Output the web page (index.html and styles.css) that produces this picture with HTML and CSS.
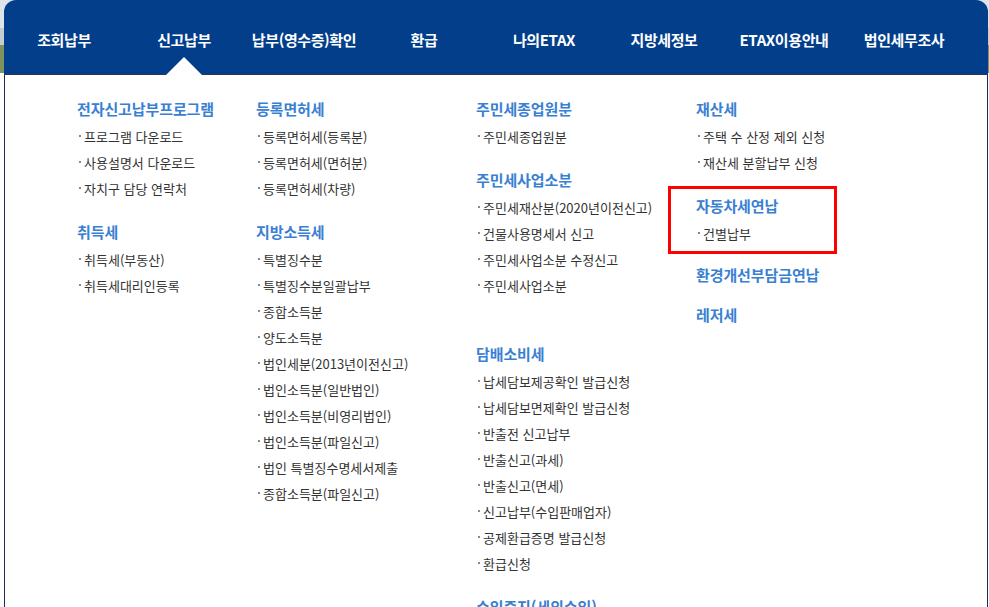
FILE: index.html
```html
<!DOCTYPE html>
<html lang="ko">
<head>
<meta charset="UTF-8">
<meta name="viewport" content="width=device-width, initial-scale=1.0">
<title>신고납부</title>
<link rel="stylesheet" href="styles.css">
</head>
<body>

<div class="gnb">
    <ul class="menu">
        <li>조회납부</li>
        <li class="on">신고납부</li>
        <li>납부(영수증)확인</li>
        <li>환급</li>
        <li>나의ETAX</li>
        <li>지방세정보</li>
        <li>ETAX이용안내</li>
        <li>법인세무조사</li>
    </ul>

    <div class="sub">
        <div class="col">
            <div class="group">
                <h3>전자신고납부프로그램</h3>
                <ul>
                    <li>프로그램 다운로드</li>
                    <li>사용설명서 다운로드</li>
                    <li>자치구 담당 연락처</li>
                </ul>
            </div>
            <div class="group">
                <h3>취득세</h3>
                <ul>
                    <li>취득세(부동산)</li>
                    <li>취득세대리인등록</li>
                </ul>
            </div>
        </div>

        <div class="col">
            <div class="group">
                <h3>등록면허세</h3>
                <ul>
                    <li>등록면허세(등록분)</li>
                    <li>등록면허세(면허분)</li>
                    <li>등록면허세(차량)</li>
                </ul>
            </div>
            <div class="group">
                <h3>지방소득세</h3>
                <ul>
                    <li>특별징수분</li>
                    <li>특별징수분일괄납부</li>
                    <li>종합소득분</li>
                    <li>양도소득분</li>
                    <li>법인세분(2013년이전신고)</li>
                    <li>법인소득분(일반법인)</li>
                    <li>법인소득분(비영리법인)</li>
                    <li>법인소득분(파일신고)</li>
                    <li>법인 특별징수명세서제출</li>
                    <li>종합소득분(파일신고)</li>
                </ul>
            </div>
        </div>

        <div class="col">
            <div class="group">
                <h3>주민세종업원분</h3>
                <ul>
                    <li>주민세종업원분</li>
                </ul>
            </div>
            <div class="group spaced">
                <h3>주민세사업소분</h3>
                <ul>
                    <li>주민세재산분(2020년이전신고)</li>
                    <li>건물사용명세서 신고</li>
                    <li>주민세사업소분 수정신고</li>
                    <li>주민세사업소분</li>
                </ul>
            </div>
            <div class="group">
                <h3>담배소비세</h3>
                <ul>
                    <li>납세담보제공확인 발급신청</li>
                    <li>납세담보면제확인 발급신청</li>
                    <li>반출전 신고납부</li>
                    <li>반출신고(과세)</li>
                    <li>반출신고(면세)</li>
                    <li>신고납부(수입판매업자)</li>
                    <li>공제환급증명 발급신청</li>
                    <li>환급신청</li>
                </ul>
            </div>
            <div class="group">
                <h3>수입증지(세외수입)</h3>
            </div>
        </div>

        <div class="col">
            <div class="group">
                <h3>재산세</h3>
                <ul>
                    <li>주택 수 산정 제외 신청</li>
                    <li>재산세 분할납부 신청</li>
                </ul>
            </div>
            <div class="group highlight">
                <h3>자동차세연납</h3>
                <ul>
                    <li>건별납부</li>
                </ul>
            </div>
            <div class="group solo">
                <h3>환경개선부담금연납</h3>
            </div>
            <div class="group">
                <h3>레저세</h3>
            </div>
        </div>
    </div>
</div>

</body>
</html>
```

FILE: styles.css
```css
* {
    box-sizing: border-box;
}
html, body {
    overflow: hidden;
}
body {
    margin: 0;
    font-family: "Noto Sans CJK KR", "Noto Sans", sans-serif;
    background: linear-gradient(to bottom, #dde4ea 0, #dde4ea 28px, #c6ccd0 28px, #c6ccd0 45px, #7f935f 45px, #7f935f 73px, #fff 73px);
}
.gnb {
    margin-left: 4px;
    width: 984px;
}
.menu {
    display: flex;
    list-style: none;
    margin: 0;
    padding: 28px 0 0;
    height: 75px;
    background-color: #023e8a;
    border-radius: 12px 12px 0 0;
    border-bottom: 1px solid #2c3550;
}
.menu li {
    position: relative;
    width: 120px;
    text-align: center;
    color: #fff;
    font-size: 15px;
    font-weight: bold;
    letter-spacing: -0.4px;
    line-height: 24px;
}
.menu li.on::after {
    content: "";
    position: absolute;
    left: 50%;
    bottom: -1px;
    margin-left: -18px;
    border-left: 18px solid transparent;
    border-right: 18px solid transparent;
    border-bottom: 18px solid #fff;
}
.sub {
    display: grid;
    grid-template-columns: 179px 220px 220px 1fr;
    padding: 22px 0 0 72px;
    height: 532px;
    background-color: #fff;
    border-left: 1px solid #1f2e4e;
    border-right: 1px solid #1f2e4e;
}
.group {
    position: relative;
    padding-bottom: 18px;
}
.group h3 {
    margin: 0 0 3px;
    font-size: 15px;
    font-weight: bold;
    line-height: 24px;
    letter-spacing: -0.1px;
    color: #3a80d2;
}
.group ul {
    list-style: none;
    margin: 0;
    padding: 0;
}
.group li {
    position: relative;
    padding-left: 7px;
    font-size: 13px;
    line-height: 26px;
    color: #333;
}
.group li::before {
    content: "";
    position: absolute;
    left: 2px;
    top: 11px;
    width: 2px;
    height: 2px;
    background-color: #7a8aa0;
}
.spaced {
    padding-bottom: 43px;
}
.solo {
    margin-top: -2px;
    padding-bottom: 13px;
}
/* red box marking the group */
.highlight::after {
    content: "";
    position: absolute;
    left: -28px;
    top: -8px;
    width: 169px;
    height: 68px;
    box-sizing: border-box;
    border: 3px solid #f00;
}
```
